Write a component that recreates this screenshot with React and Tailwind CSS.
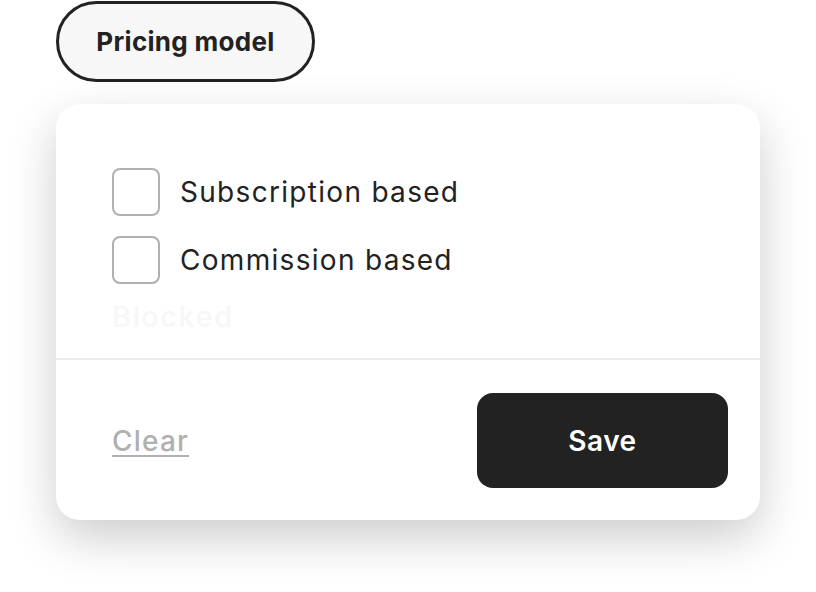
import React from 'react';

const Option = ({ label }) => (
  <label className="flex items-center gap-5 h-12 cursor-pointer">
    <span className="w-12 h-12 rounded-lg border-2 border-[#b0b0b0] bg-white shrink-0" />
    <span className="text-[28px] text-[#222222] leading-none tracking-[1.3px]">{label}</span>
  </label>
);

const App = () => {
  return (
    <div className="w-[816px] h-[592px] bg-white pl-14 pt-px font-['Inter',sans-serif] overflow-hidden">
      <button className="w-[259px] h-[81px] rounded-full border-[3px] border-[#222222] bg-[#f7f7f7] text-[26px] font-bold text-[#222222] tracking-[0.3px]">
        Pricing model
      </button>

      <div className="mt-[22px] w-[704px] bg-white rounded-3xl shadow-[0_18px_48px_rgba(0,0,0,0.2)]">
        <div className="px-14 pt-16 pb-6">
          <div className="flex flex-col gap-5">
            <Option label="Subscription based" />
            <Option label="Commission based" />
          </div>
          <div className="mt-4 text-[29px] leading-[34px] font-medium text-[#f7f7f7] tracking-[1.5px]">Blocked</div>
        </div>
        <div className="h-0.5 bg-[#ebebeb]" />
        <div className="flex items-center justify-between pl-14 pr-8 pt-[33px] pb-8">
          <button className="text-[28px] font-medium text-[#b0b0b0] underline underline-offset-4 decoration-2 tracking-[1.2px]">
            Clear
          </button>
          <button className="w-[251px] h-[95px] rounded-2xl bg-[#222222] text-white text-[28px] font-semibold tracking-[0.5px]">
            Save
          </button>
        </div>
      </div>
    </div>
  );
};

export default App;
